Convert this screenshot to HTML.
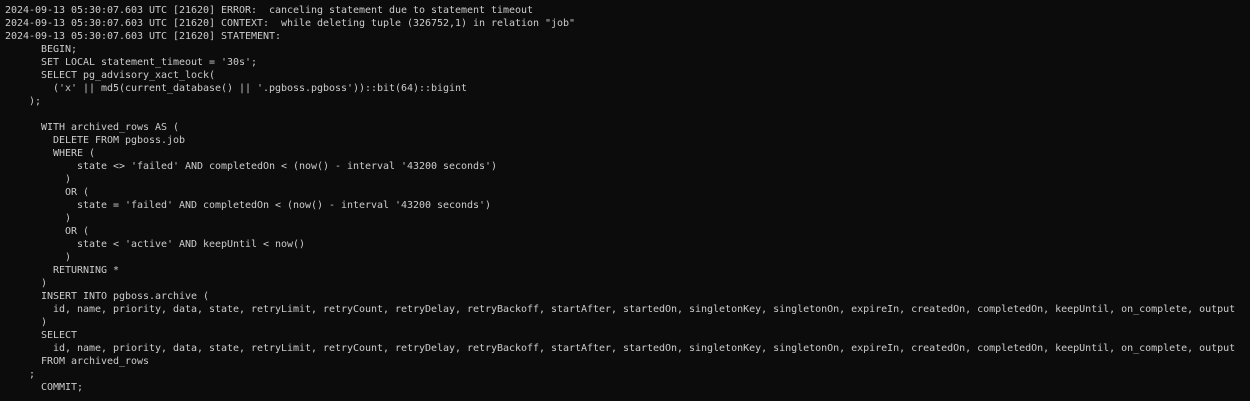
<!DOCTYPE html>
<html><head><meta charset="utf-8"><style>
html,body{margin:0;padding:0;background:#0c0c0c;width:1250px;height:401px;overflow:hidden}
pre{margin:0;padding:4px 0 0 5px;font-family:"DejaVu Sans Mono","Liberation Mono",monospace;font-size:10px;line-height:13px;letter-spacing:-0.02px;color:#cccccc;white-space:pre}
</style></head><body><pre>2024-09-13 05:30:07.603 UTC [21620] ERROR:  canceling statement due to statement timeout
2024-09-13 05:30:07.603 UTC [21620] CONTEXT:  while deleting tuple (326752,1) in relation "job"
2024-09-13 05:30:07.603 UTC [21620] STATEMENT:
      BEGIN;
      SET LOCAL statement_timeout = '30s';
      SELECT pg_advisory_xact_lock(
        ('x' || md5(current_database() || '.pgboss.pgboss'))::bit(64)::bigint
    );

      WITH archived_rows AS (
        DELETE FROM pgboss.job
        WHERE (
            state &lt;&gt; 'failed' AND completedOn &lt; (now() - interval '43200 seconds')
          )
          OR (
            state = 'failed' AND completedOn &lt; (now() - interval '43200 seconds')
          )
          OR (
            state &lt; 'active' AND keepUntil &lt; now()
          )
        RETURNING *
      )
      INSERT INTO pgboss.archive (
        id, name, priority, data, state, retryLimit, retryCount, retryDelay, retryBackoff, startAfter, startedOn, singletonKey, singletonOn, expireIn, createdOn, completedOn, keepUntil, on_complete, output
      )
      SELECT
        id, name, priority, data, state, retryLimit, retryCount, retryDelay, retryBackoff, startAfter, startedOn, singletonKey, singletonOn, expireIn, createdOn, completedOn, keepUntil, on_complete, output
      FROM archived_rows
    ;
      COMMIT;
</pre></body></html>
